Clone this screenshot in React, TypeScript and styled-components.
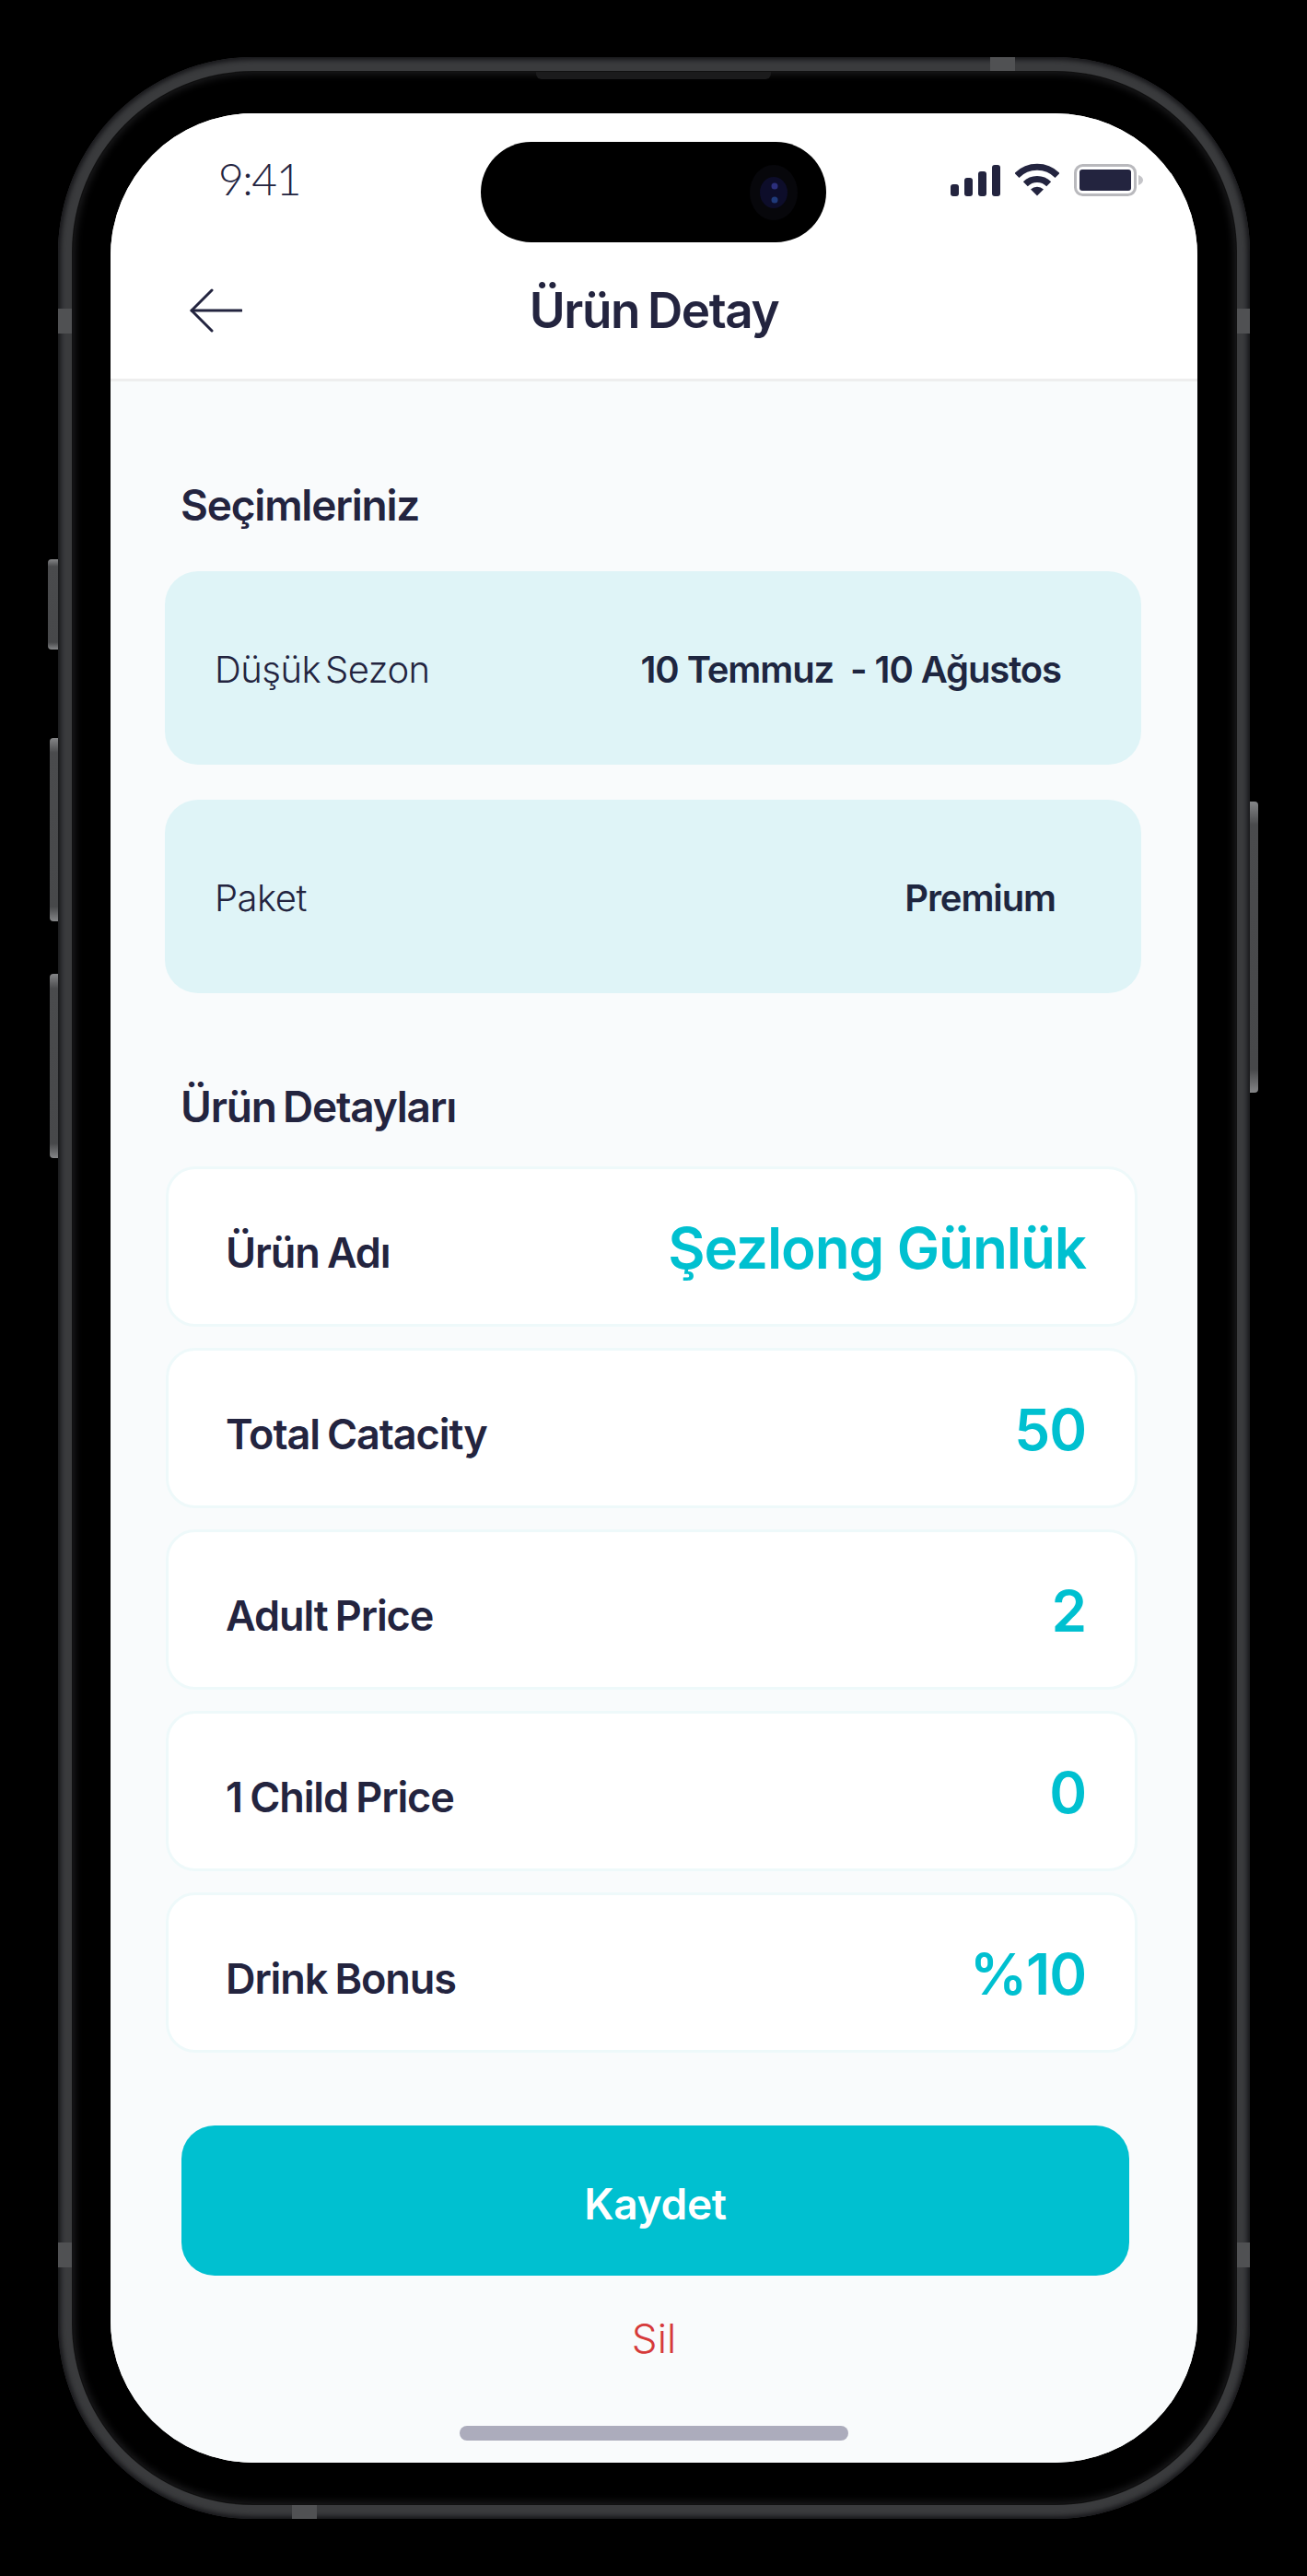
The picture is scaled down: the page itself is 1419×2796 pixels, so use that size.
import styled, { createGlobalStyle } from "styled-components";

const Global = createGlobalStyle`
    html, body {
        margin: 0;
        padding: 0;
        background: #000;
    }
    * {
        box-sizing: border-box;
    }
`;

const FONT = `Inter, "Noto Sans", "Liberation Sans", sans-serif`;
const INK = "#23243f";
const TEAL = "#00c0d0";

const details = [
    { label: "Ürün Adı", value: "Şezlong Günlük" },
    { label: "Total Catacity", value: "50" },
    { label: "Adult Price", value: "2" },
    { label: "1 Child Price", value: "0" },
    { label: "Drink Bonus", value: "%10" },
];

function SignalIcon() {
    return (
        <svg width="54" height="34" viewBox="0 0 54 34" fill={INK}>
            <rect x="0" y="21" width="9" height="13" rx="3" />
            <rect x="15" y="14" width="9" height="20" rx="3" />
            <rect x="30" y="7" width="9" height="27" rx="3" />
            <rect x="45" y="0" width="9" height="34" rx="3" />
        </svg>
    );
}

function WifiIcon() {
    return (
        <svg width="48" height="36" viewBox="0 0 48 36" fill="none" stroke={INK} strokeWidth="7">
            <path d="M2 13.5 A31 31 0 0 1 46 13.5" />
            <path d="M11.3 22.7 A18 18 0 0 1 36.7 22.7" />
            <path d="M24 35.5 L17 28.5 A10 10 0 0 1 31 28.5 Z" fill={INK} stroke="none" />
        </svg>
    );
}

function BatteryIcon() {
    return (
        <svg width="76" height="35" viewBox="0 0 76 35">
            <rect x="1.5" y="1.5" width="65" height="32" rx="8" fill="#fff" stroke="#b9b9bd" strokeWidth="3" />
            <rect x="6" y="6" width="56" height="23" rx="3" fill={INK} />
            <path d="M70 12 C73 13 75 15 75 17.5 C75 20 73 22 70 23 Z" fill="#c4c4c8" />
        </svg>
    );
}

function BackArrow() {
    return (
        <svg width="57" height="48" viewBox="0 0 57 48" fill="none" stroke={INK} strokeWidth="3" strokeLinecap="round" strokeLinejoin="round">
            <path d="M56 24 H2" />
            <path d="M24 2 L2 24 L24 46" />
        </svg>
    );
}

function Camera() {
    return (
        <svg width="54" height="64" viewBox="0 0 54 64">
            <ellipse cx="27" cy="32" rx="26" ry="30" fill="#07070b" />
            <ellipse cx="27" cy="32" rx="15" ry="17" fill="#0d0d2a" />
            <circle cx="28" cy="25" r="3.5" fill="#2c2f7c" />
            <circle cx="28" cy="40" r="3.5" fill="#1f3a7a" />
        </svg>
    );
}

export default function App() {
    return (
        <Page>
            <Global />
            <Phone>
                <SideButton $side="left" $top={545} $height={98} $wide />
                <SideButton $side="left" $top={739} $height={199} />
                <SideButton $side="left" $top={995} $height={200} />
                <SideButton $side="right" $top={808} $height={316} />
                <AntennaBand $edge="left" $at={273} />
                <AntennaBand $edge="left" $at={2372} />
                <AntennaBand $edge="right" $at={273} />
                <AntennaBand $edge="right" $at={2372} />
                <AntennaBand $edge="top" $at={1012} />
                <AntennaBand $edge="bottom" $at={254} />
                <Bezel>
                    <Speaker />
                    <Screen>
                        <Island>
                            <Camera />
                        </Island>
                        <Header>
                            <StatusBar>
                                <Time>9:41</Time>
                                <StatusIcons>
                                    <SignalIcon />
                                    <WifiIcon />
                                    <BatteryIcon />
                                </StatusIcons>
                            </StatusBar>
                            <NavBar>
                                <BackArrow />
                                <NavTitle>Ürün Detay</NavTitle>
                            </NavBar>
                        </Header>
                        <Body>
                            <SectionTitle>Seçimleriniz</SectionTitle>
                            <Choices>
                                <Choice>
                                    <ChoiceLabel>Düşük Sezon</ChoiceLabel>
                                    <ChoiceValue>10 Temmuz&nbsp; - 10 Ağustos</ChoiceValue>
                                </Choice>
                                <Choice>
                                    <ChoiceLabel>Paket</ChoiceLabel>
                                    <ChoiceValue $inset>Premium</ChoiceValue>
                                </Choice>
                            </Choices>
                            <SectionTitle $second>Ürün Detayları</SectionTitle>
                            <DetailList>
                                {details.map((d) => (
                                    <DetailRow key={d.label}>
                                        <DetailLabel>{d.label}</DetailLabel>
                                        <DetailValue>{d.value}</DetailValue>
                                    </DetailRow>
                                ))}
                            </DetailList>
                            <SaveButton>Kaydet</SaveButton>
                            <DeleteLink>Sil</DeleteLink>
                            <HomeIndicator />
                        </Body>
                    </Screen>
                </Bezel>
            </Phone>
        </Page>
    );
}

const Page = styled.div`
    width: 1419px;
    height: 2796px;
    background: #000;
    padding: 62px 0 0 63px;
    font-family: ${FONT};
    overflow: hidden;
`;

const Phone = styled.div`
    position: relative;
    width: 1294px;
    height: 2672px;
    padding: 16px 15px 16px 16px;
    border-radius: 212px;
    background: #3a3b3d;
    box-shadow: inset 0 0 5px 3px #17171a;
`;

const SideButton = styled.div<{ $side: "left" | "right"; $top: number; $height: number; $wide?: boolean }>`
    position: absolute;
    top: ${(p) => p.$top}px;
    ${(p) => p.$side}: ${(p) => (p.$wide ? -11 : -9)}px;
    width: ${(p) => (p.$wide ? 11 : 9)}px;
    height: ${(p) => p.$height}px;
    border-radius: ${(p) => (p.$side === "left" ? "4px 0 0 4px" : "0 4px 4px 0")};
    background: linear-gradient(180deg, #858688 0, #4a4b4d 8%, #47484a 92%, #858688 100%);
`;

const AntennaBand = styled.div<{ $edge: "left" | "right" | "top" | "bottom"; $at: number }>`
    position: absolute;
    background: #505153;
    ${(p) =>
        p.$edge === "left" || p.$edge === "right"
            ? `${p.$edge}: 0; top: ${p.$at}px; width: 16px; height: 27px;`
            : `${p.$edge}: 0; left: ${p.$at}px; height: 16px; width: 27px;`}
`;

const Bezel = styled.div`
    position: relative;
    height: 100%;
    padding: 45px 42px 45px 41px;
    border-radius: 196px;
    background: #000;
    box-shadow: 0 0 0 1px #111, inset 0 0 9px 2px #1e1e20;
`;

const Speaker = styled.div`
    position: absolute;
    top: 0;
    left: 503px;
    width: 255px;
    height: 8px;
    border-radius: 0 0 6px 6px;
    background: #1b1b1c;
`;

const Screen = styled.div`
    position: relative;
    height: 100%;
    display: flex;
    flex-direction: column;
    border-radius: 155px;
    background: #fff;
    overflow: hidden;
`;

const Island = styled.div`
    position: absolute;
    top: 31px;
    left: 402px;
    width: 375px;
    height: 109px;
    display: flex;
    align-items: center;
    justify-content: flex-end;
    padding-right: 30px;
    border-radius: 55px;
    background: #000;
`;

const Header = styled.header`
    height: 291px;
    flex-shrink: 0;
    display: flex;
    flex-direction: column;
    border-bottom: 3px solid #eeeeee;
    background: #fff;
`;

const StatusBar = styled.div`
    display: flex;
    justify-content: space-between;
    align-items: flex-start;
    height: 179px;
    padding: 51px 58px 0 117px;
`;

const Time = styled.span`
    font-family: Lato, ${FONT};
    font-size: 48px;
    line-height: 40px;
    font-weight: 300;
    letter-spacing: -1.5px;
    color: ${INK};
`;

const StatusIcons = styled.div`
    display: flex;
    align-items: flex-end;
    gap: 16px;
    padding-top: 3px;
`;

const NavBar = styled.nav`
    display: grid;
    grid-template-columns: 1fr auto 1fr;
    align-items: center;
    padding: 0 86px;
    height: 70px;
`;

const NavTitle = styled.h1`
    margin: 0;
    font-size: 53px;
    line-height: 70px;
    font-weight: 600;
    letter-spacing: -1.4px;
    word-spacing: -3px;
    color: ${INK};
`;

const Body = styled.main`
    flex: 1;
    display: flex;
    flex-direction: column;
    background: #f9fbfc;
`;

const SectionTitle = styled.h2<{ $second?: boolean }>`
    margin: ${(p) => (p.$second ? "93px 0 35px" : "104px 0 42px")};
    padding-left: 76px;
    font-size: 46px;
    line-height: 60px;
    font-weight: 600;
    letter-spacing: -1.2px;
    word-spacing: -3px;
    color: ${INK};
`;

const Choices = styled.div`
    display: flex;
    flex-direction: column;
    gap: 38px;
    margin: 0 61px 0 59px;
`;

const Choice = styled.div`
    height: 210px;
    flex-shrink: 0;
    display: flex;
    align-items: center;
    justify-content: space-between;
    padding: 3px 87px 0 54px;
    border-radius: 36px;
    background: #dff4f7;
`;

const ChoiceLabel = styled.span`
    font-size: 40px;
    font-weight: 300;
    letter-spacing: -0.5px;
    word-spacing: -6px;
    color: ${INK};
`;

const ChoiceValue = styled.span<{ $inset?: boolean }>`
    font-size: 40px;
    font-weight: 600;
    letter-spacing: -1.1px;
    color: #1e2640;
    margin-right: ${(p) => (p.$inset ? 6 : 0)}px;
`;

const DetailList = styled.div`
    display: flex;
    flex-direction: column;
    gap: 23px;
    margin: 0 65px 0 60px;
`;

const DetailRow = styled.div`
    height: 174px;
    flex-shrink: 0;
    display: flex;
    align-items: center;
    justify-content: space-between;
    padding: 2px 53px 0 62px;
    border: 3px solid #eef9fa;
    border-radius: 32px;
    background: #fff;
`;

const DetailLabel = styled.span`
    margin-top: 10px;
    font-size: 45px;
    font-weight: 600;
    letter-spacing: -1.1px;
    word-spacing: -2px;
    color: ${INK};
`;

const DetailValue = styled.span`
    font-size: 62px;
    font-weight: 600;
    letter-spacing: -1.1px;
    color: ${TEAL};
`;

const SaveButton = styled.button`
    height: 163px;
    flex-shrink: 0;
    margin: 79px 74px 0 77px;
    padding: 6px 0 0;
    border: 0;
    border-radius: 36px;
    background: ${TEAL};
    font-family: inherit;
    font-size: 46px;
    font-weight: 600;
    letter-spacing: -0.3px;
    color: #fff;
`;

const DeleteLink = styled.div`
    margin-top: 38px;
    text-align: center;
    font-size: 44px;
    line-height: 60px;
    font-weight: 300;
    color: #d63a3a;
`;

const HomeIndicator = styled.div`
    width: 422px;
    height: 16px;
    flex-shrink: 0;
    margin: 65px auto 0;
    border-radius: 8px;
    background: #acacbc;
`;
